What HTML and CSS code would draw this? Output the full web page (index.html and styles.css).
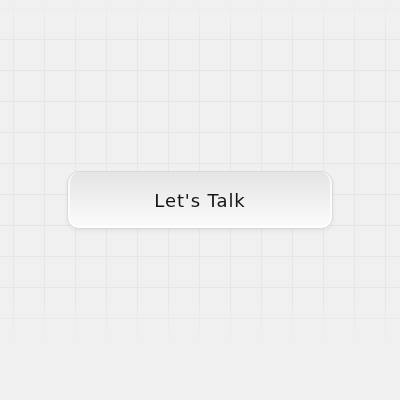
FILE: index.html
```html
<!DOCTYPE html>
<html lang="en">
<head>
    <meta charset="UTF-8">
    <meta name="viewport" content="width=device-width, initial-scale=1.0">
    <title>Let's Talk</title>
    <link rel="stylesheet" href="styles.css">
</head>
<body>
    <div class="stage">
        <button class="talk-btn">Let's Talk</button>
    </div>
</body>
</html>
```

FILE: styles.css
```css
* {
    box-sizing: border-box;
    margin: 0;
    padding: 0;
}
html, body {
    height: 100%;
}
body {
    background-color: #f0f0f0;
    font-family: "DejaVu Sans", sans-serif;
}
/* faint grid paper behind everything, fading out at the bottom */
body::before {
    content: "";
    position: fixed;
    inset: 0;
    background-image:
        linear-gradient(to right, #e6e6e6 1px, transparent 1px),
        linear-gradient(to bottom, #e6e6e6 1px, transparent 1px);
    background-size: 31px 31px;
    background-position: 13px 8px;
    -webkit-mask-image: linear-gradient(to bottom, transparent 0, #000 30px, #000 300px, transparent 345px);
    mask-image: linear-gradient(to bottom, transparent 0, #000 30px, #000 300px, transparent 345px);
    pointer-events: none;
}
.stage {
    position: relative;
    height: 100%;
    display: flex;
    justify-content: center;
    align-items: flex-start;
    padding-top: 171px;
}
.talk-btn {
    width: 266px;
    height: 58px;
    border: 1px solid #d9d9d9;
    border-radius: 12px;
    background: linear-gradient(to bottom, #e4e4e4 0%, #f1f1f1 55%, #fbfbfb 100%);
    box-shadow:
        inset 0 -2px 0 #ffffff,
        inset 2px 0 0 rgba(255, 255, 255, 0.7),
        inset -2px 0 0 rgba(255, 255, 255, 0.7),
        0 2px 4px rgba(0, 0, 0, 0.06);
    color: #141414;
    font-family: "DejaVu Sans", sans-serif;
    font-size: 18px;
    letter-spacing: 0.9px;
    cursor: pointer;
}
```
